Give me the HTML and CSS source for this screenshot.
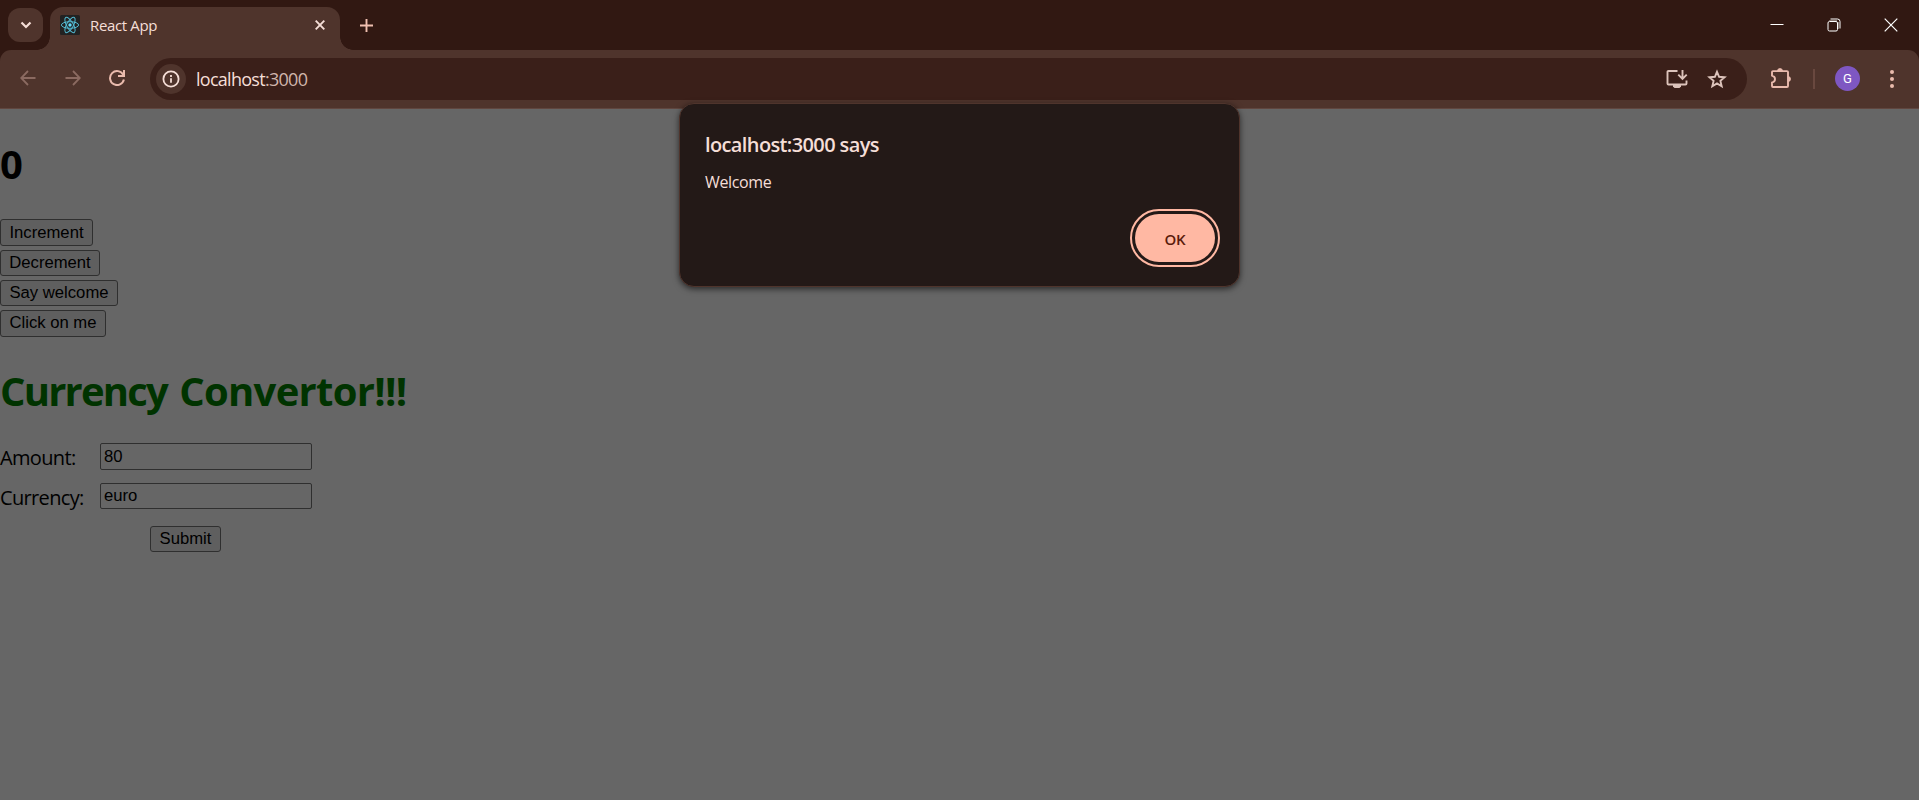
FILE: index.html
```html
<!DOCTYPE html>
<html lang="en">
<head>
<meta charset="utf-8">
<title>React App</title>
<link rel="stylesheet" href="styles.css">
</head>
<body>
<div class="browser">
  <header class="tabstrip">
    <div class="tab-search"><svg width="12" height="8" viewBox="0 0 12 8"><path d="M1.500 1.500 6 6l4.500-4.500" fill="none" stroke="#f5ded7" stroke-width="2.200"/></svg></div>
    <div class="tab">
      <svg class="favicon" width="20" height="20" viewBox="0 0 20 20"><rect width="20" height="20" rx="1.500" fill="#222"/><g fill="none" stroke="#53b9d1" stroke-width="1"><ellipse cx="10" cy="10" rx="8.600" ry="3.300"/><ellipse cx="10" cy="10" rx="8.600" ry="3.300" transform="rotate(60 10 10)"/><ellipse cx="10" cy="10" rx="8.600" ry="3.300" transform="rotate(120 10 10)"/></g><circle cx="10" cy="10" r="1.700" fill="#61dafb"/></svg>
      <span class="tab-title">React App</span>
      <svg class="tab-close" width="10" height="10" viewBox="0 0 10 10"><path d="M.7.7l8.600 8.600M9.300.7.7 9.300" stroke="#f5ded7" stroke-width="1.900"/></svg>
    </div>
    <svg class="new-tab" width="13" height="13" viewBox="0 0 13 13"><path d="M6.500 0v13M0 6.500h13" stroke="#f0bfb0" stroke-width="1.900"/></svg>
    <div class="window-controls">
      <svg width="14" height="14" viewBox="0 0 14 14"><path d="M.5 6.500h13" stroke="#fff"/></svg>
      <svg width="14" height="14" viewBox="0 0 14 14"><rect x="1" y="3.500" width="9.500" height="9.500" rx="1.500" fill="none" stroke="#fff"/><path d="M3.500 1H10.500a2.500 2.500 0 0 1 2.500 2.500V10.500" fill="none" stroke="#fff"/><path d="M2 2.500h8M11.500 4v7" stroke="#85736d"/></svg>
      <svg width="14" height="14" viewBox="0 0 14 14"><path d="M.7.7l12.600 12.600M13.300.7.7 13.300" stroke="#fff" stroke-width="1.200"/></svg>
    </div>
  </header>
  <div class="toolbar">
    <nav class="nav">
      <svg class="dim" width="16" height="16" viewBox="0 0 16 16"><path d="M15.500 8H1.500M8 1 1.200 8 8 15"/></svg>
      <svg class="dim" width="16" height="16" viewBox="0 0 16 16"><path d="M.5 8h14M8 1l6.800 7L8 15"/></svg>
      <svg class="reload" width="16" height="16" viewBox="0 0 16 16"><path d="M14.200 4.700A7 7 0 1 0 14.900 9.500M15 0v6H9"/></svg>
    </nav>
    <div class="omnibox">
      <div class="site-info"><svg width="18" height="18" viewBox="0 0 18 18"><circle cx="9" cy="9" r="7.600" fill="none" stroke="#f5ded7" stroke-width="1.800"/><path d="M9 8.300v4.500M9 5v2" stroke="#f5ded7" stroke-width="1.800"/></svg></div>
      <span class="url"><span class="host">localhost</span><span class="port">:3000</span></span>
      <svg class="install" width="22" height="20" viewBox="0 0 22 20"><path d="M11.500 2H2.500q-1 0-1 1v11.500q0 1 1 1h17q1 0 1-1v-3" fill="none" stroke="#dcc3bb" stroke-width="1.900"/><path d="M7 16h8v1.500l-1.500 1.500h-5L7 17.500z" fill="#dcc3bb"/><path d="M16.500 1v8.500M12.300 5.700l4.200 4.200 4.200-4.200" fill="none" stroke="#dcc3bb" stroke-width="1.900"/></svg>
      <svg class="star" width="20" height="20" viewBox="0 0 20 20"><path d="M10 2.800l2.100 5 5.500.5-4.200 3.600 1.300 5.400L10 14.400l-4.700 2.900 1.300-5.400-4.200-3.600 5.500-.5z" fill="none" stroke="#dcc3bb" stroke-width="1.900"/></svg>
    </div>
    <svg class="ext" width="22" height="22" viewBox="0 0 22 22"><path d="M3 4.100H17q1 0 1 1V19q0 1-1 1H3q-1 0-1-1v-3.400c2-.4 3-1.700 3-3.500s-1-3-3-3.500V5.100q0-1 1-1z" fill="none" stroke="#eabbad" stroke-width="1.900"/><path d="M7.500 4a2.500 2.500 0 0 1 5 0zM18 9.500a2.500 2.500 0 0 1 0 5z" fill="#eabbad" stroke="#eabbad" stroke-width=".8"/></svg>
    <div class="divider"></div>
    <div class="avatar">G</div>
    <svg class="menu" width="4" height="18" viewBox="0 0 4 18"><g fill="#eabbad"><circle cx="2" cy="2" r="2"/><circle cx="2" cy="9" r="2"/><circle cx="2" cy="16" r="2"/></g></svg>
  </div>
  <main class="page">
    <h1 class="count">0</h1>
    <div class="actions">
      <button class="btn btn-inc">Increment</button>
      <button class="btn btn-dec">Decrement</button>
      <button class="btn btn-say">Say welcome</button>
      <button class="btn btn-click">Click on me</button>
    </div>
    <h1 class="heading"><span class="heading-lead">Currency</span> Convertor!!!</h1>
    <form class="form">
      <label class="label label-amount">Amount:</label><input class="field field-amount" value="80">
      <label class="label label-currency">Currency:</label><input class="field" value="euro">
    </form>
    <button class="btn btn-submit" type="button">Submit</button>
  </main>
  <section class="dialog">
    <div class="dialog-title"><span>localhost:3000 says</span></div>
    <div class="dialog-text"><span>Welcome</span></div>
    <button class="ok">OK</button>
  </section>
</div>
</body>
</html>
```
FILE: styles.css
```css
* { box-sizing: border-box; }
body { margin: 0; background: #666; font-family: "Open Sans", "Noto Sans", sans-serif; }
svg { display: block; flex: none; }
.browser { position: relative; height: 800px; overflow: hidden; background: #311812; }
.tabstrip { display: flex; align-items: flex-start; height: 50px; padding-left: 8px; }
.tab-search { display: flex; align-items: center; justify-content: center; width: 35px; height: 34px; margin-top: 8px; border-radius: 12px; background: #4f342c; }
.tab { position: relative; display: flex; align-items: center; width: 290px; height: 43px; margin: 7px 0 0 7px; padding: 0 15px 7px 10px; border-radius: 13px 13px 0 0; background: #4f342c; color: #f5ded7; }
.tab::before, .tab::after { content: ""; position: absolute; bottom: 0; width: 13px; height: 13px; }
.tab::before { left: -13px; background: radial-gradient(circle at 0 0, transparent 12.5px, #4f342c 13px); }
.tab::after { right: -13px; background: radial-gradient(circle at 100% 0, transparent 12.5px, #4f342c 13px); }
.tab-title { flex: 1; margin-left: 10px; font-size: 15px; line-height: 20px; letter-spacing: -0.35px; white-space: nowrap; }
.new-tab { margin: 19px 0 0 19.5px; }
.window-controls { display: flex; gap: 43px; margin: 18px 21px 0 auto; }
.toolbar { display: flex; align-items: center; height: 59px; padding: 0 0 1px 20px; border-bottom: 1px solid #60463f; border-radius: 11px 11px 0 0; background: #4f342c; }
.nav { display: flex; gap: 28.5px; width: 130px; margin-bottom: 1px; fill: none; stroke-width: 1.8; }
.dim { stroke: #8b6a61; }
.reload { stroke: #eabbad; stroke-width: 2; }
.omnibox { display: flex; align-items: center; width: 1597px; height: 42px; margin-top: 1px; padding-left: 6px; border-radius: 21px; background: #3a1f19; }
.site-info { display: flex; align-items: center; justify-content: center; width: 30px; height: 30px; border-radius: 50%; background: #4f342c; }
.url { margin-left: 10px; font-size: 18px; line-height: 24px; letter-spacing: -0.72px; }
.host { color: #f5ded7; }
.port { color: #d0b5ac; }
.install { margin-left: auto; }
.star { margin: 0 20px 0 19px; }
.ext { margin: 0 0 2px 23px; }
.divider { width: 2px; height: 20px; margin-left: 21px; background: #69483f; }
.avatar { width: 25px; height: 25px; margin-left: 20px; border-radius: 50%; background: #7e57c2; color: #fff; font: 13px/25px Roboto, sans-serif; text-align: center; }
.menu { margin-left: 30px; }
.page { display: flow-root; height: 691px; background: #666; color: #000; }
.count, .heading { margin: 0; font-size: 40px; line-height: 54px; font-weight: 700; }
.count { margin-top: 28px; letter-spacing: -.3px; }
.actions { display: flex; flex-direction: column; align-items: flex-start; margin-top: 28px; }
.btn { display: block; height: 26px; margin: 0 0 4px; padding: 0 0 1px; border: 1px solid #2f2f2f; border-radius: 3px; background: #5f5f5f; color: #000; font: 16.667px/22px "Liberation Sans", Arial, sans-serif; text-align: center; white-space: nowrap; }
.btn-inc { width: 93px; height: 27px; margin-bottom: 4px; padding: 1px 0 0; }
.btn-dec { width: 100px; }
.btn-say { width: 118px; }
.btn-click { width: 106px; height: 27px; margin-bottom: 0; }
.heading { margin-top: 27px; color: #030; letter-spacing: -.7px; word-spacing: 2.5px; white-space: nowrap; }
.heading-lead { letter-spacing: -1.8px; }
.form { display: grid; grid-template-columns: 100px 212px; grid-template-rows: 40px 26px; margin-top: 25px; }
.label { align-self: start; height: 26px; padding-top: 1px; font-size: 20px; line-height: 27px; letter-spacing: -.65px; white-space: nowrap; }
.field { width: 212px; height: 26px; margin: 0; padding: 0 3px 1px; border: 1px solid #2f2f2f; border-radius: 2px; background: #666; color: #000; font: 16.667px/20px "Liberation Sans", Arial, sans-serif; }
.field-amount { height: 27px; padding: 1px 3px 0; }
.btn-submit { width: 71px; margin: 17px 0 0 150px; }
.dialog { position: absolute; left: 679px; top: 103px; display: flex; flex-direction: column; width: 561px; height: 184px; padding: 27px 25px 20px; border: 1px solid #4f342c; border-radius: 15px; background: #231917; box-shadow: 0 2px 6px rgba(0, 0, 0, .6); color: #f5ded7; white-space: nowrap; }
.dialog-title { font-size: 20px; line-height: 27px; font-weight: 600; letter-spacing: -.62px; }
.dialog-text { margin-top: 13px; font-size: 16px; line-height: 22px; letter-spacing: -.36px; }
.ok { align-self: flex-end; width: 80px; height: 48px; margin: 21px -1px 0 0; border: 0; padding: 1px 0 0; border-radius: 24px; background: #ffb8a3; color: #5a1b0b; outline: 2px solid #ffb8a3; outline-offset: 3px; font: 600 15px/20px "Open Sans", sans-serif; letter-spacing: -.2px; }
```
